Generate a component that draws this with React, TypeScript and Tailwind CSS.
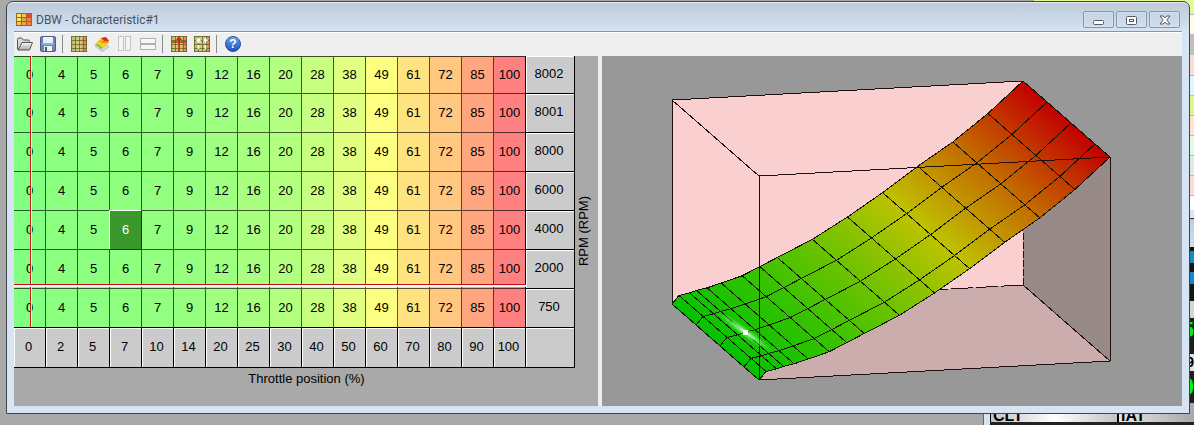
import type { ReactNode } from "react";

const throttle = [0, 2, 5, 7, 10, 14, 20, 25, 30, 40, 50, 60, 70, 80, 90, 100];
const opening = [0, 4, 5, 6, 7, 9, 12, 16, 20, 28, 38, 49, 61, 72, 85, 100];
const rpm = [8002, 8001, 8000, 6000, 4000, 2000, 750];

const selected = { rpm: 4000, throttle: 7 };

// green -> yellow -> red, low is the darkest channel and high the brightest
function heat(value: number, low: number, high: number) {
  const range = high - low;
  const r = value < 50 ? low + (value / 50) * range : high;
  const g = value < 50 ? high : high - ((value - 50) / 50) * range;
  return `rgb(${Math.round(r)}, ${Math.round(g)}, ${low})`;
}

type ToolProps = {
  label: string;
  disabled?: boolean;
  children: ReactNode;
};

function Tool({ label, disabled, children }: ToolProps) {
  return (
    <button
      type="button"
      aria-label={label}
      disabled={disabled}
      className="flex h-[22px] w-[23px] items-center pl-[3px]"
    >
      <svg width="16" height="16" viewBox="0 0 16 16">
        {children}
      </svg>
    </button>
  );
}

function Separator() {
  return (
    <div className="w-2 pt-0.5 pl-0.5">
      <div className="h-[18px] w-px bg-[#8c8c8c]" />
    </div>
  );
}

function MiniGrid() {
  return (
    <>
      <rect width="16" height="16" fill="url(#miniHeat)" />
      <path
        d="M0 .5H16M0 4.5H16M0 8.5H16M0 12.5H16M.5 0V16M4.5 0V16M8.5 0V16M12.5 0V16M15.5 0V16M0 15.5H16"
        stroke="#5c5824"
        strokeOpacity="0.7"
      />
    </>
  );
}

function Toolbar() {
  return (
    <div className="flex h-6 items-start border-t border-white bg-[#efefef]">
      <svg width="0" height="0" className="absolute">
        <defs>
          <linearGradient id="miniHeat">
            <stop offset="0" stopColor="#b2c060" />
            <stop offset="0.55" stopColor="#e0cc7c" />
            <stop offset="1" stopColor="#d08058" />
          </linearGradient>
          <linearGradient id="folder" x2="0" y2="1">
            <stop offset="0" stopColor="#fafafa" />
            <stop offset="1" stopColor="#a8a8a8" />
          </linearGradient>
        </defs>
      </svg>
      <Tool label="Open">
        <path
          d="M.5 13.5V3.5Q.5 2 2 2H4.500L6.500 4H11Q12.500 4 12.500 5.500V7"
          fill="#d8d8d8"
          stroke="#555"
        />
        <path
          d="M1 14L5 6.500H15.500L12.500 14Z"
          fill="url(#folder)"
          stroke="#555"
          strokeLinejoin="round"
        />
      </Tool>
      <Tool label="Save">
        <rect x="0.5" y="0.5" width="15" height="15" rx="1.5" fill="#6d87b4" stroke="#4b5f86" />
        <rect x="3" y="1" width="10" height="7" fill="#e8eef8" />
        <rect x="2" y="7" width="12" height="2" fill="#8fb0e0" />
        <rect x="4" y="10" width="8" height="5" fill="#f4f4f4" />
        <rect x="5" y="11" width="2" height="4" fill="#485468" />
      </Tool>
      <Separator />
      <Tool label="Table view">
        <MiniGrid />
      </Tool>
      <Tool label="Surface view">
        <path d="M1 10L8 15.500L15 11L8 7Z" fill="#d8d8e4" stroke="#b8b8c4" />
        <path d="M1 8L7 2L12 1L15 5L14 8L9 12Z" fill="#f0d020" />
        <path d="M7 2L12 1L15 5L10 5Z" fill="#d83018" />
        <path d="M5 4.500L10 5L15 5L14 7L8 7Z" fill="#f08c20" />
        <path d="M1 8L4 8.500L9 12L7 13Z" fill="#70c030" />
      </Tool>
      <Tool label="Split vertically" disabled>
        <rect x="1.500" y="0.500" width="5" height="14" fill="#f4f4f4" stroke="#c4c4c4" />
        <rect x="8.500" y="0.500" width="5" height="14" fill="#f4f4f4" stroke="#c4c4c4" />
      </Tool>
      <Tool label="Split horizontally" disabled>
        <rect x="0.500" y="2.500" width="15" height="5" fill="#f8f8f8" stroke="#b0b0b0" />
        <rect x="0.500" y="8.500" width="15" height="5" fill="#f8f8f8" stroke="#b0b0b0" />
      </Tool>
      <Separator />
      <Tool label="Show cursor">
        <MiniGrid />
        <path d="M8 1V16M1 6H15" stroke="#d02808" strokeWidth="1.500" />
        <path d="M5 4L8 0L11 4Z" fill="#d02808" />
      </Tool>
      <Tool label="Follow cursor">
        <MiniGrid />
        <path d="M4.500 3V7M11.500 3V7M4.500 9V13M11.500 9V13" stroke="#fff" strokeWidth="1.500" />
        <path d="M2 5L4.500 1.500L7 5ZM9 5L11.500 1.500L14 5Z" fill="#fff" />
      </Tool>
      <Separator />
      <button type="button" aria-label="Help" className="flex h-[22px] w-[23px] items-center pl-[3px]">
        <span className="flex size-4 items-center justify-center rounded-full border border-[#2850a0] bg-linear-to-b from-[#6fa4ee] to-[#1c50b8] text-[12px] leading-3 font-bold text-white">
          ?
        </span>
      </button>
    </div>
  );
}

function TitleBar() {
  const control =
    "flex h-[17px] w-[31px] items-center justify-center rounded-[2px] border border-[#8397b5] bg-linear-to-b from-[#c6d4e4] to-[#cfdded] shadow-[inset_0_0_0_1px_#d5e1ee]";

  return (
    <div className="flex h-[29px] items-center pt-1.5 pr-0.5 pl-0.5">
      <svg width="16" height="13" viewBox="0 0 16 13" shapeRendering="crispEdges">
        <rect width="16" height="13" fill="#a06428" />
        <path d="M1 1H5V4H1ZM1 5H5V8H1Z" fill="#f4ec60" />
        <path d="M6 1H10V4H6ZM1 9H5V12H1Z" fill="#f8c050" />
        <path d="M6 5H10V8H6ZM6 9H10V12H6Z" fill="#f0a048" />
        <path d="M11 5H15V8H11ZM11 9H15V12H11Z" fill="#f08040" />
        <path d="M11 1H15V4H11Z" fill="#e04838" />
      </svg>
      <h1 className="ml-1 flex-1 font-[Roboto,sans-serif] text-[12px] leading-4 text-[#46525f]">
        DBW - Characteristic#1
      </h1>
      <div className="flex gap-0.5">
        <button type="button" aria-label="Minimize" className={control}>
          <svg width="12" height="12" viewBox="0 0 12 12">
            <rect x="0.500" y="6.500" width="10" height="4" rx="1" fill="#fff" stroke="#535b68" />
          </svg>
        </button>
        <button type="button" aria-label="Maximize" className={control}>
          <svg width="12" height="12" viewBox="0 0 12 12">
            <rect x="0.500" y="2.500" width="10" height="8" rx="1" fill="#fff" stroke="#535b68" />
            <rect x="3.500" y="5.500" width="4" height="2" fill="#fff" stroke="#535b68" />
          </svg>
        </button>
        <button type="button" aria-label="Close" className={control}>
          <svg width="12" height="12" viewBox="0 0 12 12">
            <path
              d="M1 2H4.200L6 4L7.800 2H11L7.800 6L11 10H7.800L6 8L4.200 10H1L4.200 6Z"
              fill="#fff"
              stroke="#535b68"
              strokeLinejoin="round"
            />
          </svg>
        </button>
      </div>
    </div>
  );
}

function CharacteristicTable() {
  const axis = "border-r border-b border-black bg-[#cbcbcb] font-normal shadow-[inset_1px_1px_#fff]";

  return (
    <div className="relative">
      <table className="w-full table-fixed border-separate border-spacing-0 text-center text-[13px] leading-4 text-black">
        <colgroup>
          {throttle.map((t) => (
            <col key={t} className="w-8" />
          ))}
          <col />
        </colgroup>
        <tbody>
          {rpm.map((r, row) => (
            <tr key={r} className={row === 0 ? "h-[38px]" : "h-[39px]"}>
              {opening.map((value, i) => {
                const isSelected = r === selected.rpm && throttle[i] === selected.throttle;
                return (
                  <td
                    key={throttle[i]}
                    className={`border-r border-b p-0 ${row === 0 ? "border-t border-t-black/70" : ""} ${
                      i === 15 ? "border-r-black" : "border-r-black/65"
                    } ${row === 6 ? "border-b-black" : "border-b-black/65"} ${
                      isSelected ? "text-white shadow-[-1px_-1px_#fff]" : ""
                    }`}
                    style={{ backgroundColor: isSelected ? "#3a982c" : heat(value, 128, 255) }}
                  >
                    {value}
                  </td>
                );
              })}
              <th scope="row" className={`${axis} p-0 pr-0.5 pb-0.5`}>
                {r}
              </th>
            </tr>
          ))}
          <tr className="h-10">
            {throttle.map((t) => (
              <th key={t} scope="col" className={`${axis} p-0 pr-0.5 pb-0.5`}>
                {t}
              </th>
            ))}
            <td className={axis} />
          </tr>
        </tbody>
      </table>
      {/* live operating point */}
      <div className="absolute top-0 left-4 h-[271px] w-0.5 border-l border-[#d01818] bg-white/80" />
      <div className="absolute top-[228px] left-0 h-[3px] w-[512px] border-t border-[#c01010] bg-white/90" />
    </div>
  );
}

// oblique projection of the map, depth runs from 8002 rpm (0) to 750 rpm (1)
function project(t: number, value: number, depth: number) {
  return [71 + t * 3.51 + depth * 87, 249 - t * 0.19 - value * 2.04 + depth * 76];
}

function toPoints(points: number[][]) {
  return points.map((p) => p.join(",")).join(" ");
}

function SurfacePlot() {
  const back = throttle.map((t, i) => project(t, opening[i], 0));
  const front = throttle.map((t, i) => project(t, opening[i], 1));
  const depths = rpm.map((r) => (8002 - r) / (8002 - 750));
  const length = Math.hypot(87, 76);
  const normal = [76 / length, -87 / length];

  return (
    <svg viewBox="1 1 580 350" className="block w-full" role="img" aria-label="Surface plot">
      <defs>
        {back.slice(1).map((p, i) => {
          const q = back[i];
          const d = (p[0] - q[0]) * normal[0] + (p[1] - q[1]) * normal[1];
          return (
            <linearGradient
              key={i}
              id={`strip${i}`}
              gradientUnits="userSpaceOnUse"
              x1={q[0]}
              y1={q[1]}
              x2={q[0] + d * normal[0]}
              y2={q[1] + d * normal[1]}
            >
              <stop offset="0" stopColor={heat(opening[i], 0, 194)} />
              <stop offset="1" stopColor={heat(opening[i + 1], 0, 194)} />
            </linearGradient>
          );
        })}
        <radialGradient id="glow">
          <stop offset="0" stopColor="#fff" />
          <stop offset="0.4" stopColor="#8f8" stopOpacity="0.6" />
          <stop offset="1" stopColor="#4e4" stopOpacity="0" />
        </radialGradient>
      </defs>

      <polygon points="71,45 422,26 422,230 71,249" fill="#f9cfcf" />
      <polygon points="422,26 509,102 509,306 422,230" fill="#998a8a" />
      <polygon points="71,249 422,230 509,306 158,325" fill="#cbadad" />
      <g stroke="#201010" fill="none" shapeRendering="crispEdges">
        <path d="M71.500 249V45L422 26L509 102M71 45L158 121M509.500 102V306L158 325M422 230L509 306" />
        <path d="M422.500 178V230" strokeDasharray="7 2" />
        <path d="M422 230L330 235" strokeDasharray="22 3" />
      </g>

      <g shapeRendering="crispEdges">
        {back.slice(1).map((p, i) => (
          <polygon
            key={i}
            points={toPoints([back[i], p, front[i + 1], front[i]])}
            fill={`url(#strip${i})`}
            stroke={`url(#strip${i})`}
          />
        ))}
      </g>
      <g stroke="#101808" fill="none" shapeRendering="crispEdges">
        {back.map((p, i) => (
          <polyline key={i} points={toPoints([p, front[i]])} />
        ))}
        {depths.map((depth) => (
          <polyline
            key={depth}
            points={toPoints(throttle.map((t, i) => project(t, opening[i], depth)))}
          />
        ))}
        <path d="M158.500 325V121L509 102" stroke="#201010" />
      </g>
      <ellipse cx="144" cy="277" rx="38" ry="5" fill="url(#glow)" transform="rotate(36 144 277)" />
      <rect x="142" y="275" width="5" height="5" fill="#fff" />
    </svg>
  );
}

// slivers of the log list and the gauge window that stay visible behind
function BackgroundWindows() {
  return (
    <div aria-hidden="true">
      <div className="absolute top-0 right-0 flex w-40 flex-col overflow-hidden text-right">
        <div className="h-3.5 bg-[#e4fb94]" />
        <div className="h-5 border-t border-[#b8b8b8] bg-[#fffee0]" />
        <div className="h-[21px] bg-[#bfbfbf]" />
        <div className="h-5 bg-[#fbdcd6]" />
        <div className="h-5 border-t border-[#b8b8b8] bg-[#e0f6ff]" />
        <div className="h-5 border-t border-[#b8b8b8] bg-[#def58c]" />
        <div className="h-5 border-t border-[#b8b8b8] bg-[#fde2d8]" />
        <div className="h-5 border-t border-[#b8b8b8] bg-[#defcde]" />
        <div className="h-5 border-t border-[#b8b8b8] bg-[#e6e6e6]" />
        <div className="h-5 border-t border-[#b8b8b8] bg-[#fddcd6]" />
        <div className="h-[15px] border-t border-[#b8b8b8] bg-white" />
        <div className="h-2 bg-[#d6e4f3]" />
        <div className="h-[29px] border-t border-[#333] bg-linear-to-b from-[#bccbda] to-[#d2e0ee]" />
        <div className="h-1 bg-[#111]" />
        <div className="h-3 bg-[#1a86c6]" />
        <div className="h-[9px] bg-[#161616]" />
        <div className="h-3 bg-[#1a86c6]" />
        <div className="h-[17px] bg-[#161616]" />
        <div className="h-[17px] bg-[#d4d4d4]" />
        <div className="h-9 bg-[#1e1e1e] text-[22px] leading-6 font-bold text-[#00f020]">5</div>
        <div className="h-[17px] bg-[#e2e2e2] text-[14px] leading-4 font-bold text-black">9</div>
        <div className="h-9 bg-[#1e1e1e] text-[24px] leading-8 font-bold text-[#00f020]">0</div>
      </div>
      <div className="absolute right-0 bottom-0 flex h-[22px] w-[211px] border-l border-[#666] bg-[#d6e4f3] pl-1.5">
        <div className="flex flex-1 border-b-3 border-[#222] text-[16px] leading-4 font-bold text-black">
          <div className="w-[127px] border-l border-black bg-linear-to-r from-[#c4c4c4] via-white to-[#c4c4c4] pt-[5px] pl-0.5">
            CLT
          </div>
          <div className="flex-1 border-l-2 border-black bg-linear-to-r from-[#e8e8e8] to-[#a8a8a8] pt-[5px] pl-0.5">
            IAT
          </div>
        </div>
      </div>
    </div>
  );
}

export default function App() {
  return (
    <div className="relative flow-root min-h-screen overflow-hidden bg-[#a9a9a9] font-['Liberation_Sans',Arial,sans-serif]">
      <BackgroundWindows />
      <main className="relative mt-px mr-1 ml-1.5 rounded-t-[7px] border border-[#3e444a] bg-[#d6e4f3] bg-linear-to-b from-[#bccad8] to-[#d6e4f3] to-[30px] px-[7px] pb-[7px] shadow-[inset_0_1px_#e6eef6]">
        <TitleBar />
        <div className="border-t border-[#8696a8]">
          <Toolbar />
          <div className="flex">
            <section className="flex w-[584px] shrink-0 bg-[#a9a9a9] text-[13px] leading-4 text-black">
              <div className="w-[561px]">
                <CharacteristicTable />
                <p className="pt-[3px] pb-[19px] pl-6 text-center">Throttle position (%)</p>
              </div>
              <div className="flex flex-1 items-center pl-px">
                <p className="rotate-180 [writing-mode:vertical-rl]">RPM (RPM)</p>
              </div>
            </section>
            <div className="w-1 bg-[#efefef]" />
            <section className="flex-1 bg-[#989898]">
              <SurfacePlot />
            </section>
          </div>
        </div>
      </main>
    </div>
  );
}
